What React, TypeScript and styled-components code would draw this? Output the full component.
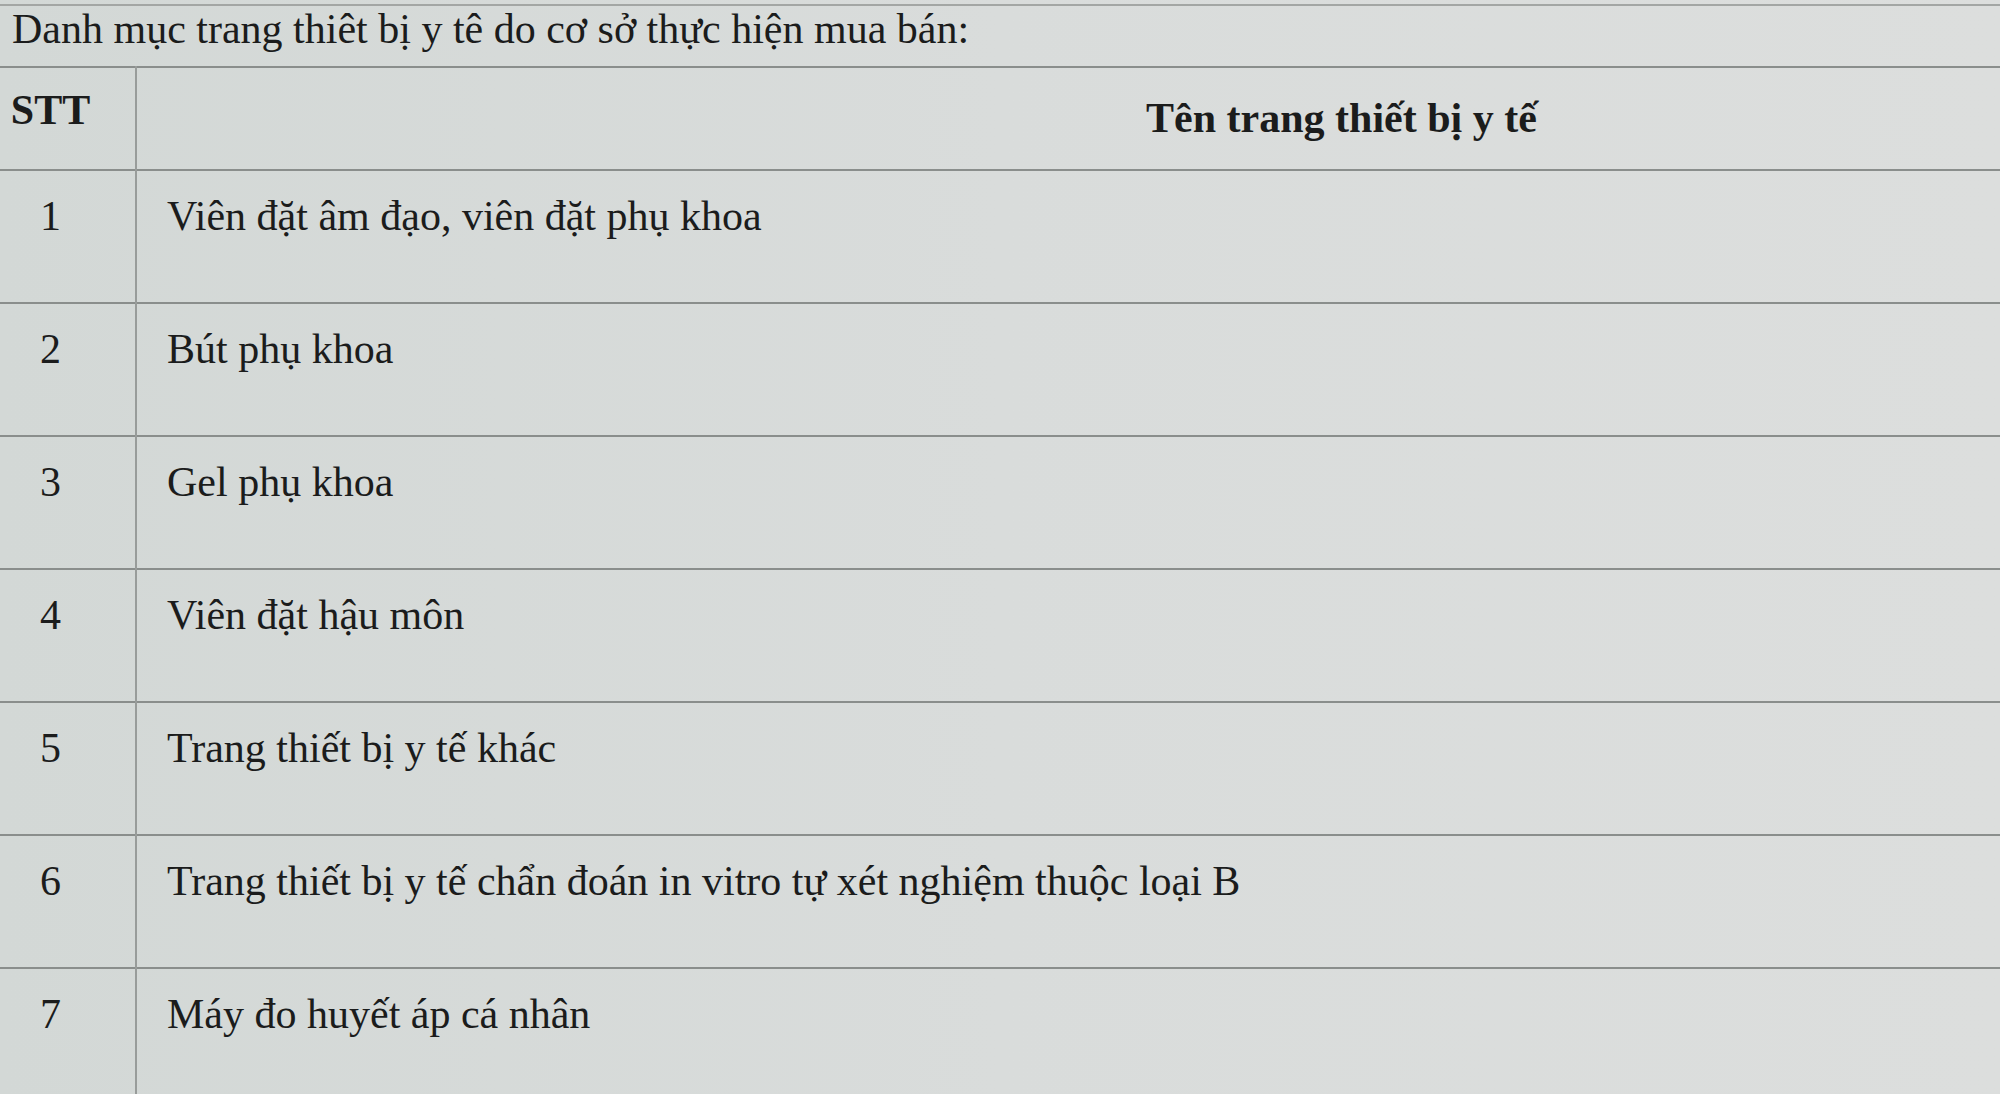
import React from "react";
import styled, { createGlobalStyle } from "styled-components";

const GlobalStyle = createGlobalStyle`
  html, body {
    margin: 0;
    padding: 0;
    overflow: hidden;
    background: #d8dcda;
  }
  body {
    font-family: "Liberation Serif", "Times New Roman", serif;
    color: #1b1c1c;
  }
`;

const Page = styled.div`
  width: 2000px;
  height: 1094px;
  overflow: hidden;
  padding-top: 4px;
  box-sizing: border-box;
  background: linear-gradient(90deg, #d3d8d6 0%, #d9dcdb 50%, #dcdedd 100%);
`;

const TopRule = styled.div`
  height: 2px;
  width: 2600px;
  background: #a3a6a4;
`;

const Title = styled.p`
  margin: 0;
  height: 60px;
  padding: 0 0 0 12px;
  box-sizing: border-box;
  font-size: 42px;
  line-height: 46px;
  white-space: nowrap;
`;

const Table = styled.table`
  width: 2546px;
  border-collapse: collapse;
  table-layout: fixed;
  font-size: 42px;
  line-height: 48px;
`;

const HeadRow = styled.tr`
  height: 103px;
  border-top: 2px solid #8a8e8c;
  border-bottom: 2px solid #8a8e8c;
`;

const Row = styled.tr`
  height: 133px;
  border-bottom: 2px solid #8a8e8c;
`;

const NumCell = styled.td<{ $head?: boolean }>`
  width: 136px;
  box-sizing: border-box;
  padding: ${(p) => (p.$head ? "18px" : "21px")} 34px 0 0;
  vertical-align: top;
  text-align: center;
  border-right: 2px solid #989c9a;
  font-weight: ${(p) => (p.$head ? 700 : 400)};
  white-space: nowrap;
`;

const NameCell = styled.td<{ $head?: boolean }>`
  padding: ${(p) => (p.$head ? "26px 0 0 0" : "21px 0 0 30px")};
  vertical-align: top;
  text-align: ${(p) => (p.$head ? "center" : "left")};
  font-weight: ${(p) => (p.$head ? 700 : 400)};
  white-space: nowrap;
`;

const items = [
  "Viên đặt âm đạo, viên đặt phụ khoa",
  "Bút phụ khoa",
  "Gel phụ khoa",
  "Viên đặt hậu môn",
  "Trang thiết bị y tế khác",
  "Trang thiết bị y tế chẩn đoán in vitro tự xét nghiệm thuộc loại B",
  "Máy đo huyết áp cá nhân",
];

export default function App() {
  return (
    <>
      <GlobalStyle />
      <Page>
        <TopRule />
        <Title>Danh mục trang thiêt bị y tê do cơ sở thực hiện mua bán:</Title>
        <Table>
          <thead>
            <HeadRow>
              <NumCell as="th" $head>
                STT
              </NumCell>
              <NameCell as="th" $head>
                Tên trang thiết bị y tế
              </NameCell>
            </HeadRow>
          </thead>
          <tbody>
            {items.map((name, i) => (
              <Row key={name}>
                <NumCell>{i + 1}</NumCell>
                <NameCell>{name}</NameCell>
              </Row>
            ))}
          </tbody>
        </Table>
      </Page>
    </>
  );
}
